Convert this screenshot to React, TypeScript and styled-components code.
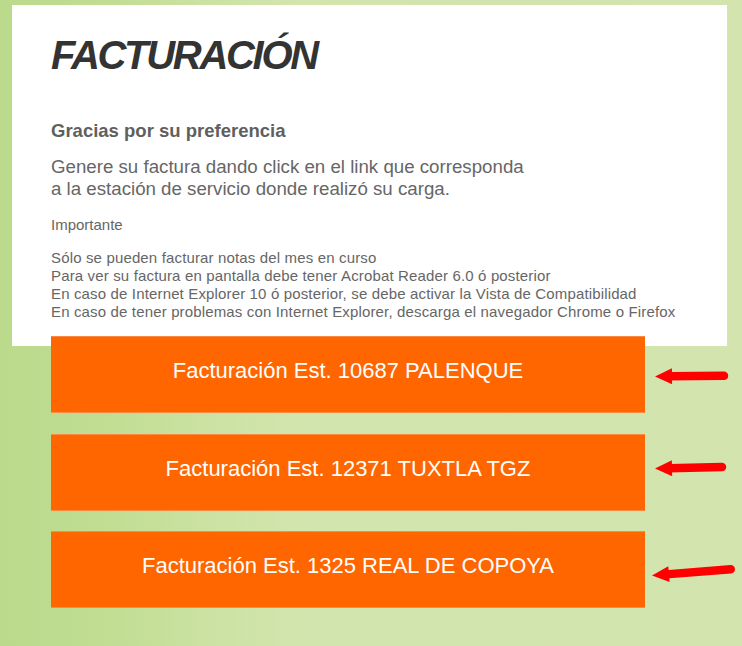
import React from 'react';
import styled, { createGlobalStyle } from 'styled-components';

// Billing landing page: white intro card, then one orange link per
// service station, each pointed at by a hand-drawn red arrow.

const GlobalStyle = createGlobalStyle`
  html, body {
    margin: 0;
    padding: 0;
  }
  body {
    font-family: "Liberation Sans", Arial, sans-serif;
    background: linear-gradient(
      90deg,
      #bbda8b 0%,
      #c0dd92 14%,
      #cbe2a3 28%,
      #d2e5ad 40%,
      #d3e4ae 100%
    );
    min-height: 100vh;
  }
`;

const Page = styled.div`
  padding-top: 5px;
  min-height: 100vh;
  box-sizing: border-box;
`;

const Card = styled.section`
  background: #ffffff;
  margin: 0 15px 0 12px;
  padding: 27px 10px 25px 39px;
`;

const Title = styled.h1`
  margin: 0;
  font-size: 40px;
  line-height: 46px;
  font-weight: 700;
  font-style: italic;
  letter-spacing: -2.3px;
  color: #333333;
`;

const Thanks = styled.h2`
  margin: 42px 0 0;
  font-size: 18.5px;
  line-height: 22px;
  font-weight: 700;
  color: #5f5f5f;
`;

const Lead = styled.p`
  margin: 14px 0 0;
  font-size: 18.7px;
  line-height: 22px;
  color: #666666;
`;

const Note = styled.p`
  margin: 16px 0 0;
  font-size: 15px;
  line-height: 18px;
  color: #666666;
`;

const Notes = styled.p`
  margin: 15px 0 0;
  font-size: 15px;
  line-height: 18px;
  letter-spacing: 0.15px;
  color: #666666;
`;

const Links = styled.div`
  display: flex;
  flex-direction: column;
  gap: 20.5px;
  margin-top: -10px;
  padding-left: 51px;
  position: relative;
`;

const Row = styled.div`
  display: flex;
  align-items: center;
`;

const StationLink = styled.a`
  display: flex;
  align-items: center;
  justify-content: center;
  box-sizing: border-box;
  width: 594px;
  height: 77px;
  padding-bottom: 7px;
  background: #ff6600;
  border-top: 1px solid #fb8a44;
  border-bottom: 1px solid #fb8a44;
  color: #ffffff;
  font-size: 22px;
  text-decoration: none;
  flex-shrink: 0;
`;

const ArrowSvg = styled.svg<{ $gap: number; $dy: number; $tilt: number }>`
  flex-shrink: 0;
  margin-left: ${(p) => p.$gap}px;
  transform: translateY(${(p) => p.$dy}px) rotate(${(p) => p.$tilt}deg);
  transform-origin: 0 50%;
`;

type ArrowProps = { length: number; gap: number; dy: number; tilt: number };

const Arrow = ({ length, gap, dy, tilt }: ArrowProps) => (
  <ArrowSvg
    width={length + 2}
    height={30}
    viewBox={`0 0 ${length + 2} 30`}
    $gap={gap}
    $dy={dy}
    $tilt={tilt}
  >
    <line
      x1={14}
      y1={15}
      x2={length - 4}
      y2={15}
      stroke="#ff0000"
      strokeWidth={8.5}
      strokeLinecap="round"
    />
    <polygon points="0,15 17,7 17,23" fill="#ff0000" />
  </ArrowSvg>
);

const stations = [
  { label: 'Facturación Est. 10687 PALENQUE', arrow: { length: 73, gap: 10, dy: 1.5, tilt: -0.6 } },
  { label: 'Facturación Est. 12371 TUXTLA TGZ', arrow: { length: 71, gap: 10, dy: -3.5, tilt: -1.2 } },
  { label: 'Facturación Est. 1325 REAL DE COPOYA', arrow: { length: 83, gap: 7, dy: 5.5, tilt: -4.6 } },
];

export default function App() {
  return (
    <>
      <GlobalStyle />
      <Page>
        <Card>
          <Title>FACTURACIÓN</Title>
          <Thanks>Gracias por su preferencia</Thanks>
          <Lead>
            Genere su factura dando click en el link que corresponda
            <br />
            a la estación de servicio donde realizó su carga.
          </Lead>
          <Note>Importante</Note>
          <Notes>
            Sólo se pueden facturar notas del mes en curso
            <br />
            Para ver su factura en pantalla debe tener Acrobat Reader 6.0 ó posterior
            <br />
            En caso de Internet Explorer 10 ó posterior, se debe activar la Vista de Compatibilidad
            <br />
            En caso de tener problemas con Internet Explorer, descarga el navegador Chrome o Firefox
          </Notes>
        </Card>
        <Links>
          {stations.map((s) => (
            <Row key={s.label}>
              <StationLink href="#">{s.label}</StationLink>
              <Arrow {...s.arrow} />
            </Row>
          ))}
        </Links>
      </Page>
    </>
  );
}
